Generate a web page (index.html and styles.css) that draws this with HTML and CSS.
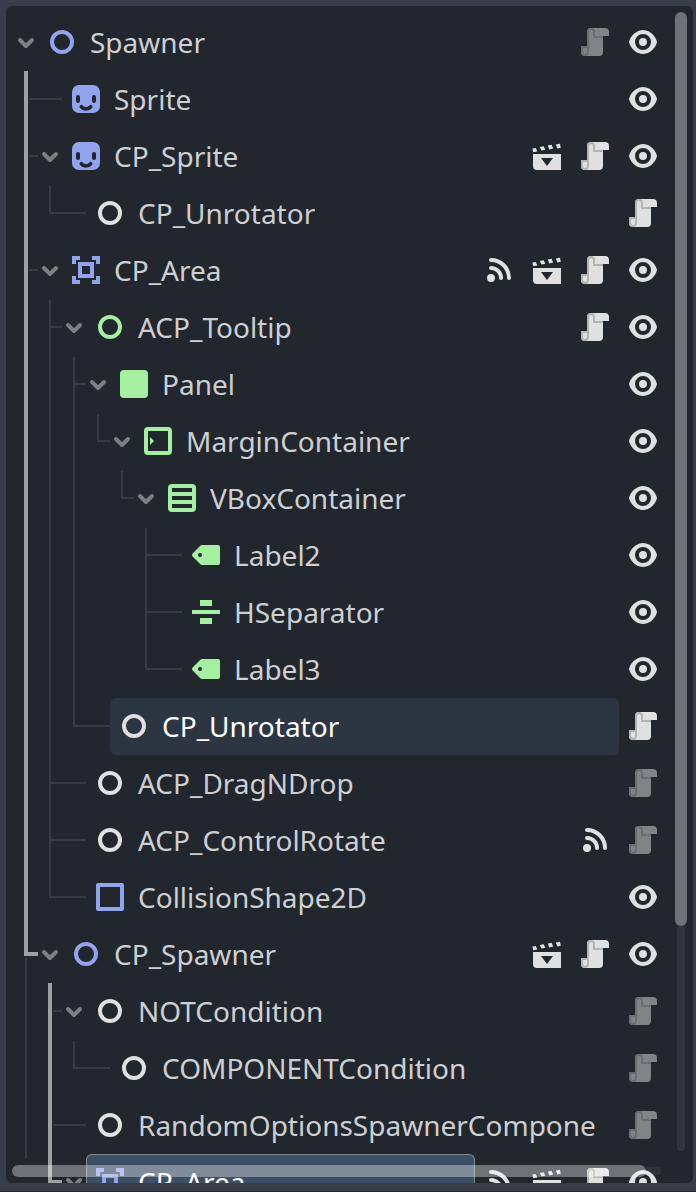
FILE: index.html
```html
<!DOCTYPE html>
<html lang="en">
<head>
<meta charset="utf-8">
<title>Scene tree</title>
<link rel="stylesheet" href="styles.css">
</head>
<body>
<svg class="defs" width="0" height="0">
  <symbol id="chevron" viewBox="0 0 16 16"><path d="M5 7l3 3 3-3" fill="none" stroke="#7d7f82" stroke-width="2" stroke-linecap="round" stroke-linejoin="round"/></symbol>
  <symbol id="node" viewBox="0 0 16 16"><circle cx="8" cy="8" r="5" fill="none" stroke="currentColor" stroke-width="2"/></symbol>
  <symbol id="sprite" viewBox="0 0 16 16"><rect x="1" y="1" width="14" height="14" rx="3.5" fill="currentColor"/><rect x="3" y="6" width="2" height="4" rx="1" fill="#22272e"/><rect x="11" y="6" width="2" height="4" rx="1" fill="#22272e"/><path d="M5.7 11.9C6.8 13.3 9.2 13.3 10.3 11.9" fill="none" stroke="#22272e" stroke-width="1.9" stroke-linecap="round"/></symbol>
  <symbol id="area" viewBox="0 0 16 16"><path d="M1 1v4h2V3h2V1zM11 1v2h2v2h2V1zM1 11v4h4v-2H3v-2zM13 11v2h-2v2h4v-4z" fill="currentColor"/><rect x="5" y="5" width="6" height="6" fill="none" stroke="currentColor" stroke-width="2"/></symbol>
  <symbol id="panel" viewBox="0 0 16 16"><rect x="1" y="1" width="14" height="14" rx="2" fill="currentColor"/></symbol>
  <symbol id="margin" viewBox="0 0 16 16"><rect x="2" y="2" width="12" height="12" rx="1" fill="none" stroke="currentColor" stroke-width="2"/><path d="M4 6l2 2-2 2z" fill="currentColor"/></symbol>
  <symbol id="vbox" viewBox="0 0 16 16"><path fill-rule="evenodd" d="M3 1a2 2 0 0 0-2 2v10a2 2 0 0 0 2 2h10a2 2 0 0 0 2-2V3a2 2 0 0 0-2-2zM3 3h10v2H3zM3 7h10v2H3zM3 11h10v2H3z" fill="currentColor"/></symbol>
  <symbol id="label" viewBox="0 0 16 16"><path fill-rule="evenodd" d="M6 3a1 1 0 0 0-.7.3l-4 4a1 1 0 0 0 0 1.4l4 4A1 1 0 0 0 6 13h8a1 1 0 0 0 1-1V4a1 1 0 0 0-1-1zM5 7a1 1 0 0 1 0 2 1 1 0 0 1 0-2z" fill="currentColor"/></symbol>
  <symbol id="hsep" viewBox="0 0 16 16"><path d="M5 2h6v3H5zM1 7h14v2H1zM5 11h6v3H5z" fill="currentColor"/></symbol>
  <symbol id="shape" viewBox="0 0 16 16"><rect x="2" y="2" width="12" height="12" fill="none" stroke="currentColor" stroke-width="2" stroke-linejoin="round"/></symbol>
  <symbol id="eye" viewBox="0 0 16 16"><path d="M8 2C5.443 2 2.209 3.948 1.045 7.705a1 1 0 0 0-.004.576C2.163 12.211 5.5 14 8 14s5.837-1.789 6.961-5.719a1 1 0 0 0 0-.553C13.861 3.935 10.557 2 8 2zm0 2a4 4 0 0 1 4 4 4 4 0 0 1-4 4 4 4 0 0 1-4-4 4 4 0 0 1 4-4zm0 2a2 2 0 0 0-2 2 2 2 0 0 0 2 2 2 2 0 0 0 2-2 2 2 0 0 0-2-2z" fill="currentColor"/></symbol>
  <symbol id="script" viewBox="0 0 16 16"><path d="M6 1a2 2 0 0 0-2 2v7H1v3a2 2 0 0 0 2 2h7a2 2 0 0 0 2-2V5h3V3a2 2 0 0 0-2-2z" fill="currentColor"/><path d="M6 1a2 2 0 0 0-2 2v7H1v3a2 2 0 0 0 4 0V3a1 1 0 0 1 2 0v3h5V5H8V3a2 2 0 0 0-2-2zm-4 10h2v2a1 1 0 0 1-2 0z" fill="#b4b4b4"/></symbol>
  <symbol id="clapper" viewBox="0 0 16 16"><path fill-rule="evenodd" d="M1 7v6a2 2 0 0 0 2 2h12V7zM5 9h6l-3 4z" fill="currentColor"/><path d="M.7 4.3l1.7-.3.8 1.7-2.1.4zM4.4 3.5l1.9-.4.9 1.8-2 .4zM8.4 2.8l1.9-.4.8 1.9-2 .4zM12.4 2.2l2.1-.3.4 2-1.7.4z" fill="currentColor"/></symbol>
  <symbol id="signal" viewBox="0 0 16 16"><circle cx="4" cy="12" r="2" fill="currentColor"/><path d="M4 3a9 9 0 0 1 9 9M4 7a5 5 0 0 1 5 5" fill="none" stroke="currentColor" stroke-width="2" stroke-linecap="round"/></symbol>
</svg>

<main class="panel">
  <div class="tree">
    <div class="row"><svg class="fold"><use href="#chevron"/></svg><div class="item"><svg class="icon blue"><use href="#node"/></svg><span class="name">Spawner</span></div><div class="actions"><svg class="icon dim"><use href="#script"/></svg><svg class="icon"><use href="#eye"/></svg></div></div>

    <div class="row"><i class="g bold tee"></i><i class="g dash"></i><div class="item"><svg class="icon blue"><use href="#sprite"/></svg><span class="name">Sprite</span></div><div class="actions"><svg class="icon"><use href="#eye"/></svg></div></div>

    <div class="row"><i class="g bold tee"></i><svg class="fold"><use href="#chevron"/></svg><div class="item"><svg class="icon blue"><use href="#sprite"/></svg><span class="name">CP_Sprite</span></div><div class="actions"><svg class="icon"><use href="#clapper"/></svg><svg class="icon"><use href="#script"/></svg><svg class="icon"><use href="#eye"/></svg></div></div>

    <div class="row"><i class="g bold"></i><i class="g line first elbow"></i><i class="g dash"></i><div class="item"><svg class="icon"><use href="#node"/></svg><span class="name">CP_Unrotator</span></div><div class="actions"><svg class="icon"><use href="#script"/></svg></div></div>

    <div class="row"><i class="g bold tee"></i><svg class="fold"><use href="#chevron"/></svg><div class="item"><svg class="icon blue"><use href="#area"/></svg><span class="name">CP_Area</span></div><div class="actions"><svg class="icon"><use href="#signal"/></svg><svg class="icon"><use href="#clapper"/></svg><svg class="icon"><use href="#script"/></svg><svg class="icon"><use href="#eye"/></svg></div></div>

    <div class="row"><i class="g bold"></i><i class="g line first tee"></i><svg class="fold"><use href="#chevron"/></svg><div class="item"><svg class="icon green"><use href="#node"/></svg><span class="name">ACP_Tooltip</span></div><div class="actions"><svg class="icon"><use href="#script"/></svg><svg class="icon"><use href="#eye"/></svg></div></div>

    <div class="row"><i class="g bold"></i><i class="g line"></i><i class="g line first tee"></i><svg class="fold"><use href="#chevron"/></svg><div class="item"><svg class="icon green"><use href="#panel"/></svg><span class="name">Panel</span></div><div class="actions"><svg class="icon"><use href="#eye"/></svg></div></div>

    <div class="row"><i class="g bold"></i><i class="g line"></i><i class="g line"></i><i class="g line first elbow"></i><svg class="fold"><use href="#chevron"/></svg><div class="item"><svg class="icon green"><use href="#margin"/></svg><span class="name">MarginContainer</span></div><div class="actions"><svg class="icon"><use href="#eye"/></svg></div></div>

    <div class="row"><i class="g bold"></i><i class="g line"></i><i class="g line"></i><i class="g"></i><i class="g line first elbow"></i><svg class="fold"><use href="#chevron"/></svg><div class="item"><svg class="icon green"><use href="#vbox"/></svg><span class="name">VBoxContainer</span></div><div class="actions"><svg class="icon"><use href="#eye"/></svg></div></div>

    <div class="row"><i class="g bold"></i><i class="g line"></i><i class="g line"></i><i class="g"></i><i class="g"></i><i class="g line first tee"></i><i class="g dash"></i><div class="item"><svg class="icon green"><use href="#label"/></svg><span class="name">Label2</span></div><div class="actions"><svg class="icon"><use href="#eye"/></svg></div></div>

    <div class="row"><i class="g bold"></i><i class="g line"></i><i class="g line"></i><i class="g"></i><i class="g"></i><i class="g line tee"></i><i class="g dash"></i><div class="item"><svg class="icon green"><use href="#hsep"/></svg><span class="name">HSeparator</span></div><div class="actions"><svg class="icon"><use href="#eye"/></svg></div></div>

    <div class="row"><i class="g bold"></i><i class="g line"></i><i class="g line"></i><i class="g"></i><i class="g"></i><i class="g line elbow"></i><i class="g dash"></i><div class="item"><svg class="icon green"><use href="#label"/></svg><span class="name">Label3</span></div><div class="actions"><svg class="icon"><use href="#eye"/></svg></div></div>

    <div class="row"><i class="g bold"></i><i class="g line"></i><i class="g line elbow"></i><i class="g dash"></i><div class="item hovered"><svg class="icon"><use href="#node"/></svg><span class="name">CP_Unrotator</span></div><div class="actions"><svg class="icon"><use href="#script"/></svg></div></div>

    <div class="row"><i class="g bold"></i><i class="g line tee"></i><i class="g dash"></i><div class="item"><svg class="icon"><use href="#node"/></svg><span class="name">ACP_DragNDrop</span></div><div class="actions"><svg class="icon dim"><use href="#script"/></svg></div></div>

    <div class="row"><i class="g bold"></i><i class="g line tee"></i><i class="g dash"></i><div class="item"><svg class="icon"><use href="#node"/></svg><span class="name">ACP_ControlRotate</span></div><div class="actions"><svg class="icon"><use href="#signal"/></svg><svg class="icon dim"><use href="#script"/></svg></div></div>

    <div class="row"><i class="g bold"></i><i class="g line elbow"></i><i class="g dash"></i><div class="item"><svg class="icon blue"><use href="#shape"/></svg><span class="name">CollisionShape2D</span></div><div class="actions"><svg class="icon"><use href="#eye"/></svg></div></div>

    <div class="row"><i class="g bold elbow resume"></i><svg class="fold"><use href="#chevron"/></svg><div class="item"><svg class="icon blue"><use href="#node"/></svg><span class="name">CP_Spawner</span></div><div class="actions"><svg class="icon"><use href="#clapper"/></svg><svg class="icon"><use href="#script"/></svg><svg class="icon"><use href="#eye"/></svg></div></div>

    <div class="row"><i class="g line"></i><i class="g bold tee"></i><svg class="fold"><use href="#chevron"/></svg><div class="item"><svg class="icon"><use href="#node"/></svg><span class="name">NOTCondition</span></div><div class="actions"><svg class="icon dim"><use href="#script"/></svg></div></div>

    <div class="row"><i class="g line"></i><i class="g bold"></i><i class="g line first elbow"></i><i class="g dash"></i><div class="item"><svg class="icon"><use href="#node"/></svg><span class="name">COMPONENTCondition</span></div><div class="actions"><svg class="icon dim"><use href="#script"/></svg></div></div>

    <div class="row"><i class="g line"></i><i class="g bold tee"></i><i class="g dash"></i><div class="item"><svg class="icon"><use href="#node"/></svg><span class="name">RandomOptionsSpawnerCompone</span></div><div class="actions"><svg class="icon dim"><use href="#script"/></svg></div></div>

    <div class="row"><i class="g line stub"></i><i class="g bold elbow"></i><svg class="fold"><use href="#chevron"/></svg><div class="item selected"><svg class="icon blue"><use href="#area"/></svg><span class="name">CP_Area</span></div><div class="actions"><svg class="icon"><use href="#signal"/></svg><svg class="icon"><use href="#clapper"/></svg><svg class="icon"><use href="#script"/></svg><svg class="icon"><use href="#eye"/></svg></div></div>
  </div>
  <div class="vscroll"><div class="vthumb"></div><div class="vtrack"></div></div>
  <div class="hscroll"><div class="hthumb"></div><div class="htrack"></div></div>
</main>
</body>
</html>
```
FILE: styles.css
```css
* { box-sizing: border-box; }

body {
  margin: 0;
  height: 1192px;
  padding: 6px 3px 9px 6px;
  overflow: hidden;
  background: #373d49;
  border-bottom: 1px solid #20242c;
  font-family: "Noto Sans", sans-serif;
  font-size: 28px;
  color: #cdcfd2;
}

.defs { position: absolute; }

.panel {
  position: relative;
  display: flex;
  height: 1177px;
  padding: 8px 6px 0 8px;
  overflow: hidden;
  border-radius: 6px;
  background: #22272e;
}

.tree { width: 645px; flex: none; }

.row { display: flex; height: 57px; }

/* Indent guides: one 24px cell per ancestor level */
.g, .fold { flex: none; width: 24px; height: 57px; }
.g { display: grid; grid-template-columns: 24px; grid-template-rows: 57px; }
.g::before, .g::after { grid-area: 1 / 1; background: #383b44; }
.line::before { content: ""; width: 2px; margin-left: 11px; }
.line.first::before { margin-top: 1px; }
.line.elbow::before { margin-bottom: 28px; }
.line.stub::before { margin-bottom: 53px; }
.tee::after, .elbow::after, .dash::after {
  content: "";
  height: 2px;
  margin: 27px 0 0 13px;
}
.dash::after { margin-left: 0; }
.bold::before { content: ""; width: 4px; margin-left: 10px; background: #a0a1a3; }
.bold.tee::after { margin-left: 15px; }
.bold.elbow::before { margin-bottom: 27px; }
.bold.elbow::after { height: 4px; margin: 26px 0 0 14px; background: #a0a1a3; }
.resume {
  background: linear-gradient(#383b44, #383b44) 11px 32px / 2px 25px no-repeat;
}

.fold { height: 32px; width: 32px; margin: 12px -4px 0; }

.item {
  flex: 1;
  min-width: 0;
  display: flex;
  align-items: flex-start;
  padding-left: 8px;
  border-radius: 6px;
}
.icon { flex: none; width: 32px; height: 32px; margin-top: 12px; color: #e0e0e0; }
.blue { color: #93a4ee; }
.green { color: #a5efa0; }
.dim { opacity: .5; }
.name {
  margin-left: 12px;
  line-height: 57px;
  white-space: nowrap;
  overflow: hidden;
}
.hovered { background: #2c3542; color: #fff; }
.selected {
  background: #3d4f64;
  color: #fff;
  box-shadow: inset 0 0 0 1px #7f8790;
}
.actions { display: flex; gap: 16px; margin-left: 8px; }

.vscroll {
  display: flex;
  flex-direction: column;
  align-items: center;
  width: 12px;
  height: 1139px;
  margin: -2px 0 0 16px;
}
.vthumb { width: 12px; height: 914px; border-radius: 6px; background: #6f7276; }
.vtrack { width: 8px; flex: 1; border-radius: 0 0 4px 4px; background: #32353e; }

/* Horizontal scrollbar floats over the last row */
.hscroll {
  position: absolute;
  left: 6px;
  bottom: 6px;
  display: flex;
  align-items: center;
  width: 649px;
  height: 12px;
}
.hthumb { width: 634px; height: 12px; border-radius: 6px; background: rgba(255, 255, 255, .35); }
.htrack { flex: 1; height: 8px; border-radius: 0 4px 4px 0; background: rgba(255, 255, 255, .06); }
```
